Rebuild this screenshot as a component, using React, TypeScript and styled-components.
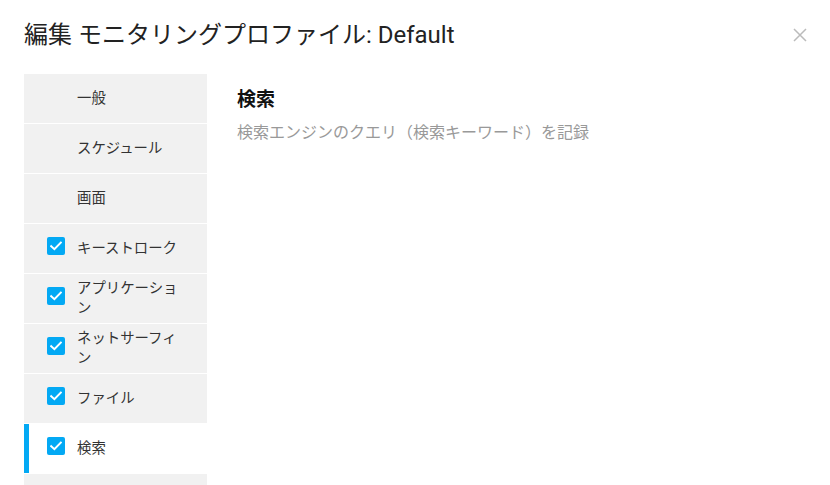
import React from "react";
import styled, { createGlobalStyle } from "styled-components";

const Global = createGlobalStyle`
  html, body { margin: 0; padding: 0; background: #fff; }
  body {
    font-family: "Roboto", "Noto Sans CJK JP", sans-serif;
    color: #333;
    width: 830px;
    height: 485px;
    overflow: hidden;
  }
`;

const Page = styled.div`
  display: flex;
  flex-direction: column;
  height: 485px;
  overflow: hidden;
`;

const Header = styled.div`
  display: flex;
  align-items: center;
  justify-content: space-between;
  padding: 20px 23px 0 24px;
  height: 30px;
`;

const Title = styled.h1`
  margin: 0;
  font-size: 24px;
  line-height: 30px;
  font-weight: 400;
  color: #222;
`;

const Close = styled.button`
  border: none;
  background: none;
  padding: 0;
  width: 14px;
  height: 14px;
  display: flex;
  cursor: pointer;
`;

const Body = styled.div`
  display: flex;
  margin-top: 24px;
  padding-left: 24px;
  flex: 1;
  min-height: 0;
`;

const Sidebar = styled.ul`
  list-style: none;
  margin: 0;
  padding: 0 0 30px;
  width: 183px;
  background: #f1f1f1;
  flex-shrink: 0;
`;

const Item = styled.li<{ $active?: boolean }>`
  position: relative;
  display: flex;
  align-items: center;
  gap: 12px;
  height: 49px;
  padding-left: 23px;
  border-bottom: 1px solid #fff;
  background: ${(p) => (p.$active ? "#fff" : "#f1f1f1")};
  font-size: 14.4px;
  line-height: 20px;
  color: #333;
  &::before {
    content: "";
    position: absolute;
    left: 0;
    top: 0;
    bottom: 0;
    width: 5px;
    background: ${(p) => (p.$active ? "#03a9f4" : "transparent")};
  }
`;

const Box = styled.span<{ $shown: boolean }>`
  width: 18px;
  height: 18px;
  margin-bottom: 6px;
  border-radius: 2px;
  background: #03a9f4;
  display: flex;
  align-items: center;
  justify-content: center;
  flex-shrink: 0;
  visibility: ${(p) => (p.$shown ? "visible" : "hidden")};
`;

const Label = styled.span`
  width: 106px;
`;

const Content = styled.div`
  margin-left: 30px;
  padding-top: 13px;
`;

const Heading = styled.h2`
  margin: 0;
  font-size: 19px;
  line-height: 26px;
  font-weight: 700;
  color: #111;
`;

const Desc = styled.p`
  margin: 10px 0 0;
  font-size: 16px;
  line-height: 20px;
  color: #999;
`;

const items = [
  { label: "一般", checked: false },
  { label: "スケジュール", checked: false },
  { label: "画面", checked: false },
  { label: "キーストローク", checked: true },
  { label: "アプリケーション", checked: true },
  { label: "ネットサーフィン", checked: true },
  { label: "ファイル", checked: true },
  { label: "検索", checked: true, active: true },
];

const Check = () => (
  <svg width="12" height="10" viewBox="0 0 12 10">
    <path d="M1.2 5.2 L4.4 8.2 L10.8 1.6" fill="none" stroke="#fff" strokeWidth="2" strokeLinecap="square" />
  </svg>
);

export default function App() {
  return (
    <Page>
      <Global />
      <Header>
        <Title>編集 モニタリングプロファイル: Default</Title>
        <Close aria-label="close">
          <svg width="14" height="14" viewBox="0 0 14 14">
            <path d="M1 1 L13 13 M13 1 L1 13" stroke="#bbb" strokeWidth="1.5" />
          </svg>
        </Close>
      </Header>
      <Body>
        <Sidebar>
          {items.map((it) => (
            <Item key={it.label} $active={it.active}>
              <Box $shown={it.checked}>
                <Check />
              </Box>
              <Label>{it.label}</Label>
            </Item>
          ))}
        </Sidebar>
        <Content>
          <Heading>検索</Heading>
          <Desc>検索エンジンのクエリ（検索キーワード）を記録</Desc>
        </Content>
      </Body>
    </Page>
  );
}
